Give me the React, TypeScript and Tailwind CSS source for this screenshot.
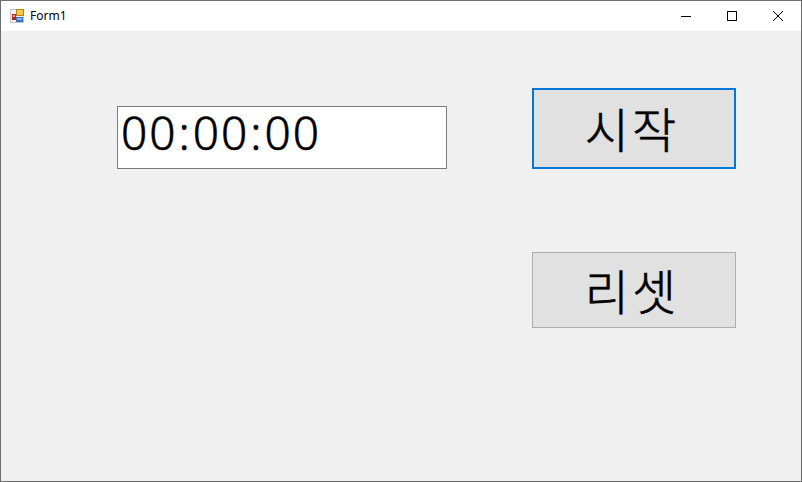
const font = "font-['Malgun_Gothic','Noto_Sans_CJK_KR','Noto_Sans',sans-serif]";

function AppIcon() {
  return (
    <svg width="16" height="16" viewBox="0 0 16 16" shapeRendering="crispEdges">
      <rect x="0" y="1" width="14" height="14" fill="#c4c4c4" />
      <rect x="1" y="2" width="12" height="12" fill="#f4f4f4" />
      <rect x="2" y="6" width="4" height="6" fill="#b5231f" />
      <rect x="3" y="7" width="2" height="2" fill="#e8a0a0" />
      <rect x="6" y="1" width="8" height="7" fill="#b8860b" />
      <rect x="7" y="2" width="6" height="5" fill="#f5c84a" />
      <rect x="6" y="9" width="7" height="5" fill="#2f6fc9" />
      <rect x="7" y="10" width="5" height="2" fill="#8fb8ee" />
    </svg>
  );
}

function WindowButton({ children }: { children: React.ReactNode }) {
  return (
    <div className="flex h-full w-[46px] items-center justify-center">
      <svg width="12" height="12" viewBox="0 0 12 12" fill="none" stroke="#000">
        {children}
      </svg>
    </div>
  );
}

export default function App() {
  return (
    <div className={`flex h-[482px] w-[802px] flex-col border border-[#6e6e6e] bg-[#f0f0f0] ${font}`}>
      <div className="flex h-[30px] shrink-0 items-center bg-white pl-[9px]">
        <AppIcon />
        <span className="ml-[4px] font-['Noto_Sans',sans-serif] text-[12px] text-black">Form1</span>
        <div className="ml-auto flex h-full">
          <WindowButton>
            <path d="M1 6.5H11" shapeRendering="crispEdges" />
          </WindowButton>
          <WindowButton>
            <rect x="1.5" y="1.5" width="9" height="9" shapeRendering="crispEdges" />
          </WindowButton>
          <WindowButton>
            <path d="M1 1L11 11M11 1L1 11" />
          </WindowButton>
        </div>
      </div>

      <div className="flex flex-1 pl-[116px] pt-[57px]">
        <div className="mt-[18px] flex h-[63px] w-[330px] items-start border border-[#7a7a7a] bg-white pl-[3px]">
          <span className="font-['Noto_Sans',sans-serif] text-[46px] leading-[50px] font-light tracking-[2px] text-black [-webkit-text-stroke:0.6px_black]">
            00<span className="px-px">:</span>00<span className="px-px">:</span>00
          </span>
        </div>
        <div className="ml-[85px] flex w-[204px] flex-col gap-[83px]">
          <button className="flex h-[81px] items-center justify-center border-2 border-[#0078d7] bg-[#e1e1e1] pr-[4px] pb-[3px] text-[48px] font-light tracking-[3px] text-black [-webkit-text-stroke:0.6px_black]">
            시작
          </button>
          <button className="flex h-[76px] items-center justify-center border border-[#adadad] bg-[#e1e1e1] pr-[4px] pb-[3px] text-[48px] font-light tracking-[3px] text-black [-webkit-text-stroke:0.6px_black]">
            리셋
          </button>
        </div>
      </div>
    </div>
  );
}
